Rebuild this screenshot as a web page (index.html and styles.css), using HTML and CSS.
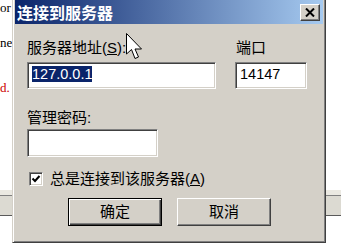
FILE: index.html
```html
<!DOCTYPE html>
<html>
<head>
<meta charset="utf-8">
<link rel="stylesheet" href="styles.css">
</head>
<body>
<div class="screen">
  <div class="bg">
    <p class="l1">or</p>
    <p class="l2">ne</p>
    <p class="l3">d.</p>
    <div class="bar"></div>
  </div>

  <div class="dialog">
    <div class="titlebar">
      <span class="title">连接到服务器</span>
      <span class="close"><svg width="10" height="9" viewBox="0 0 10 9"><path d="M1 0.5 L9 8.5 M9 0.5 L1 8.5" stroke="#000" stroke-width="2" fill="none"/></svg></span>
    </div>
    <div class="content">
      <div class="grid">
        <div class="col">
          <div class="label">服务器地址(<u>S</u>):</div>
          <div class="field addr"><span class="sel">127.0.0.1</span></div>
        </div>
        <div class="col">
          <div class="label port-label">端口</div>
          <div class="field port">14147</div>
        </div>
      </div>
      <div class="label pwd-label">管理密码:</div>
      <div class="field pwd"></div>
      <div class="check-row">
        <span class="check"><svg width="10" height="10" viewBox="0 0 10 10"><path d="M1.5 4.5 L4 7 L8.5 2" stroke="#000" stroke-width="2" fill="none"/></svg></span>
        <span class="check-label">总是连接到该服务器(<u>A</u>)</span>
      </div>
      <div class="buttons">
        <div class="btn default">确定</div>
        <div class="btn">取消</div>
      </div>
    </div>
  </div>

  <svg class="cursor" width="17" height="27" viewBox="0 0 17 27"><polygon points="0.5,0.5 0.5,21 5.5,16.5 9,25.5 12.5,24 9,16 15.5,16" fill="#fff" stroke="#000" stroke-width="1"/></svg>
</div>
</body>
</html>
```

FILE: styles.css
```css
* { box-sizing: border-box; }

body {
  margin: 0;
  background: #fff;
  width: 341px;
  height: 249px;
  overflow: hidden;
}

.screen {
  position: relative;
  width: 341px;
  height: 249px;
  overflow: hidden;
}

.bg {
  font-family: "Liberation Serif", serif;
  font-size: 13px;
  line-height: 16px;
  color: #000;
}

.bg p {
  margin: 0;
  white-space: nowrap;
}

.l2 { margin-top: 19px !important; }
.l3 { margin-top: 29px !important; color: #cc0000; }

.bar {
  margin-top: 94px;
  height: 26px;
  background: linear-gradient(to bottom, #ebe9e2 0, #ebe9e2 5px, #808080 5px, #808080 6px, #dcdad2 6px, #dcdad2 25px, #5a5a5a 25px, #5a5a5a 26px);
}

.dialog {
  position: absolute;
  left: 12px;
  top: -3px;
  width: 314px;
  height: 246px;
  background: #d4d0c8;
  border: 1px solid;
  border-color: #d4d0c8 #404040 #404040 #d4d0c8;
  box-shadow: inset 1px 1px #fff, inset -1px -1px #808080;
  padding: 2px;
  font-family: "Liberation Sans", "Noto Sans CJK SC", sans-serif;
  font-size: 15px;
  color: #000;
}

.titlebar {
  height: 24px;
  background: linear-gradient(to right, #0a246a, #a6caf0);
  display: flex;
  align-items: center;
  justify-content: space-between;
  padding: 0 3px 0 2px;
}

.title {
  color: #fff;
  font-weight: bold;
  font-size: 16px;
  line-height: 20px;
  font-family: "Noto Sans CJK SC", sans-serif;
}

.close {
  width: 20px;
  height: 17px;
  background: #d4d0c8;
  border: 1px solid;
  border-color: #fff #404040 #404040 #fff;
  box-shadow: inset -1px -1px #808080;
  display: flex;
  align-items: center;
  justify-content: center;
}

.close svg { display: block; }

.content {
  padding: 15px 0 0 12px;
}

.grid {
  display: grid;
  grid-template-columns: 189px 72px;
  column-gap: 19px;
}

.label {
  height: 18px;
  line-height: 18px;
  margin-bottom: 5px;
  white-space: nowrap;
}

.port-label { margin-left: 1px; }

.field {
  height: 27px;
  background: #fff;
  border: 1px solid;
  border-color: #808080 #fff #fff #808080;
  box-shadow: inset 1px 1px #404040, inset -1px -1px #d4d0c8;
  padding: 4px 3px 0 4px;
  font-size: 14.5px;
  line-height: 15px;
  white-space: nowrap;
}

.sel {
  background: #0a246a;
  color: #fff;
}

.pwd-label {
  margin-top: 20px;
  margin-bottom: 2px;
}

.pwd {
  width: 131px;
  height: 28px;
}

.check-row {
  display: flex;
  align-items: center;
  gap: 7px;
  height: 18px;
  margin-top: 13px;
  margin-left: 2px;
  line-height: 18px;
}

.check {
  width: 14px;
  height: 14px;
  background: #fff;
  border: 1px solid;
  border-color: #808080 #fff #fff #808080;
  box-shadow: inset 1px 1px #404040, inset -1px -1px #d4d0c8;
  display: flex;
  align-items: center;
  justify-content: center;
}

.check svg { display: block; }

.check-label { white-space: nowrap; }

.buttons {
  display: flex;
  gap: 15px;
  margin-top: 10px;
  margin-left: 41px;
}

.btn {
  width: 94px;
  height: 28px;
  background: #d4d0c8;
  border: 1px solid;
  border-color: #fff #404040 #404040 #fff;
  box-shadow: inset -1px -1px #808080;
  display: flex;
  align-items: center;
  justify-content: center;
  line-height: 18px;
}

.btn.default {
  border: 1px solid #000;
  box-shadow: inset 1px 1px #fff, inset -1px -1px #404040, inset -2px -2px #808080;
}

.cursor {
  position: absolute;
  left: 126px;
  top: 33px;
}
```
